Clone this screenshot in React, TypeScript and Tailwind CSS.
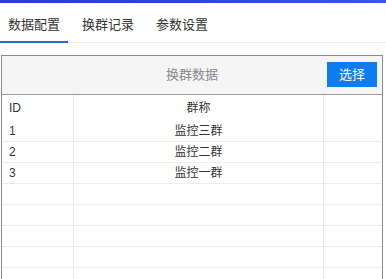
const tabs = ['数据配置', '换群记录', '参数设置'];

const rows = [
  { id: '1', name: '监控三群' },
  { id: '2', name: '监控二群' },
  { id: '3', name: '监控一群' },
  { id: '', name: '' },
  { id: '', name: '' },
  { id: '', name: '' },
  { id: '', name: '' },
  { id: '', name: '' },
];

const App = () => {
  return (
    <div className="h-[279px] w-[386px] overflow-hidden bg-white text-[#333] font-['Liberation_Sans','Noto_Sans_CJK_SC',sans-serif]">
      <div className="h-[3px] bg-gradient-to-r from-[#2c3ccc] via-[#2f45d6] to-[#3a57e2]" />

      {/* tabs */}
      <div className="flex gap-[6px] border-b border-[#ececec]">
        {tabs.map((tab, i) => (
          <div
            key={tab}
            className={`-mb-px px-[8px] pt-[12px] pb-[6px] text-[13px] leading-[20px] border-b-2 ${
              i === 0 ? 'border-[#2a6bd1]' : 'border-transparent'
            }`}
          >
            {tab}
          </div>
        ))}
      </div>

      {/* panel */}
      <div className="mt-3 ml-[1px] w-[382px] border border-[#8c8c8c]">
        <div className="relative flex h-[39px] items-center justify-center border-b border-[#9a9a9a] bg-[#f5f5f5]">
          <span className="text-[13px] text-[#8a8a8a]">换群数据</span>
          <button className="absolute right-[5px] top-[6px] h-[25px] w-[50px] bg-[#0b7df3] text-[13px] text-white">
            选择
          </button>
        </div>

        <div className="grid grid-cols-[72px_250px_1fr] text-[12px]">
          <div className="flex h-[26px] items-center border-r border-[#e8e8e8] pl-[7px]">ID</div>
          <div className="flex h-[26px] items-center justify-center border-r border-[#e8e8e8]">群称</div>
          <div className="h-[26px]" />
          {rows.map((row, i) => (
            <div key={i} className="contents">
              <div className="flex h-[21px] items-center border-r border-b border-[#ececec] pl-[7px]">{row.id}</div>
              <div className="flex h-[21px] items-center justify-center border-r border-b border-[#ececec]">{row.name}</div>
              <div className="h-[21px] border-b border-[#ececec]" />
            </div>
          ))}
        </div>
      </div>
    </div>
  );
};

export default App;
